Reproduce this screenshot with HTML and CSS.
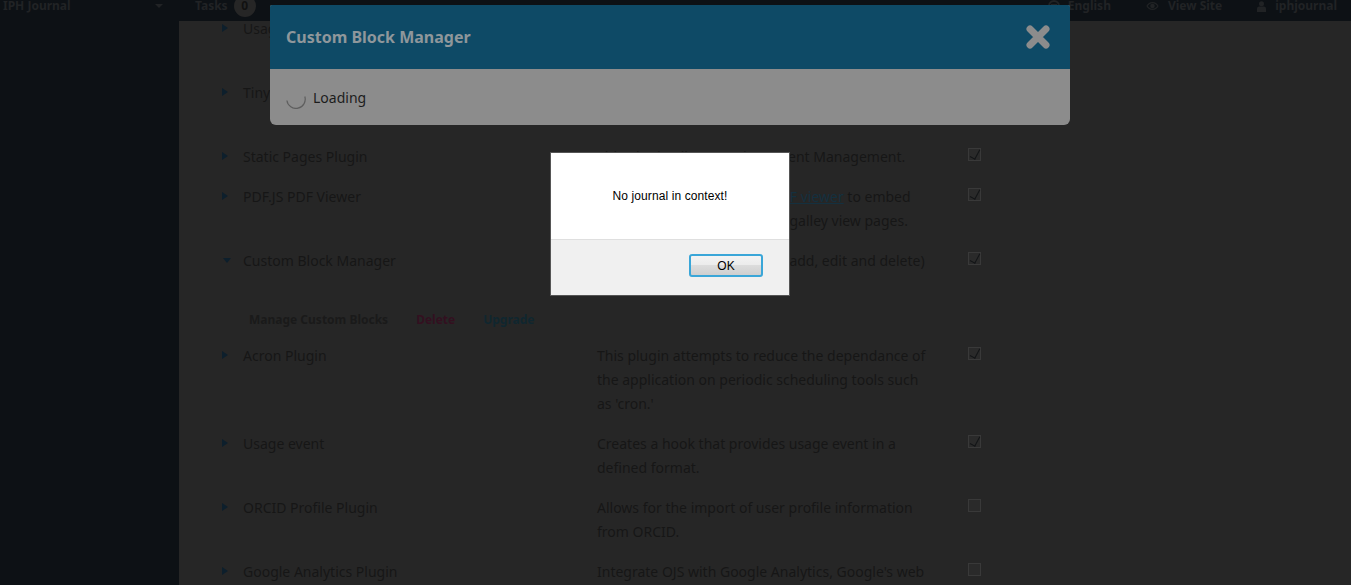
FILE: index.html
```html
<!DOCTYPE html>
<html lang="en">
<head>
<meta charset="utf-8">
<title>Custom Block Manager</title>
<link rel="stylesheet" href="styles.css">
</head>
<body>
<header class="topbar">
  <div class="brand"><span class="brand-name">IPH Journal</span><span class="caret"></span></div>
  <div class="tasks"><span>Tasks</span><span class="badge">0</span></div>
  <nav class="topnav">
    <span class="navitem"><svg class="ico" viewBox="0 0 12 12"><circle cx="6" cy="6" r="5" fill="none" stroke="currentColor" stroke-width="2"/><path d="M3 4h6v4H3z" fill="currentColor"/></svg>English</span>
    <span class="navitem"><svg class="ico eye" viewBox="0 0 13 10"><path d="M6.5 1C3.5 1 1.3 3 .4 5c.9 2 3.1 4 6.1 4s5.2-2 6.1-4c-.9-2-3.1-4-6.1-4zm0 1.3c2 0 3.8 1.2 4.8 2.7-1 1.5-2.8 2.7-4.8 2.7S2.7 6.5 1.7 5c1-1.5 2.8-2.7 4.8-2.7z" fill="currentColor"/><circle cx="6.5" cy="5" r="2.3" fill="currentColor"/></svg>View Site</span>
    <span class="navitem"><svg class="ico user" viewBox="0 0 10 12"><circle cx="5" cy="3" r="2.8" fill="currentColor"/><path d="M0 12V8.5C0 7 1.2 6 2.5 6h5C8.8 6 10 7 10 8.5V12z" fill="currentColor"/></svg>iphjournal</span>
  </nav>
</header>
<div class="shell">
  <aside class="sidebar"></aside>
  <main class="main">
    <div class="list">
      <div class="row"><span class="arrow"></span><span class="name">Usage Statistics Plugin</span><p class="desc">Present data objects usage statistics.<br>Collects and reports usage.</p><span class="box on"></span></div>
      <div class="row"><span class="arrow"></span><span class="name">TinyMCE Plugin</span><p class="desc">This plugin enables WYSIWYG editing of OJS<br>textareas.</p><span class="box on"></span></div>
      <div class="row"><span class="arrow"></span><span class="name">Static Pages Plugin</span><p class="desc">This plugin allows Static Content Management.</p><span class="box on"></span></div>
      <div class="row"><span class="arrow"></span><span class="name">PDF.JS PDF Viewer</span><p class="desc">This plugin uses the <a class="link" href="#">pdf.js PDF viewer</a> to embed PDFs on the article and issue galley view pages.</p><span class="box on"></span></div>
      <div class="row"><span class="arrow down"></span><span class="name">Custom Block Manager</span><p class="desc">This plugin lets you manage (add, edit and delete)</p><span class="box on"></span></div>
      <div class="actions"><a class="act" href="#">Manage Custom Blocks</a><a class="act del" href="#">Delete</a><a class="act up" href="#">Upgrade</a></div>
      <div class="row"><span class="arrow"></span><span class="name">Acron Plugin</span><p class="desc">This plugin attempts to reduce the dependance of the application on periodic scheduling tools such as 'cron.'</p><span class="box on"></span></div>
      <div class="row"><span class="arrow"></span><span class="name">Usage event</span><p class="desc">Creates a hook that provides usage event in a defined format.</p><span class="box on"></span></div>
      <div class="row"><span class="arrow"></span><span class="name">ORCID Profile Plugin</span><p class="desc">Allows for the import of user profile information from ORCID.</p><span class="box"></span></div>
      <div class="row"><span class="arrow"></span><span class="name">Google Analytics Plugin</span><p class="desc">Integrate OJS with Google Analytics, Google's web site traffic analysis application.</p><span class="box"></span></div>
    </div>
  </main>
</div>
<section class="modal">
  <div class="modal-head">
    <h1 class="modal-title">Custom Block Manager</h1>
    <svg class="close" viewBox="0 0 24 24"><path d="M12 12L4 4M12 12L20 4M12 12L4 20M12 12L20 20" stroke="currentColor" stroke-width="7" stroke-linecap="round"/></svg>
  </div>
  <div class="modal-body"><svg class="spinner" viewBox="0 0 20 20"><path d="M18.8 7.5A9.2 9.2 0 1 1 .9 11.5" fill="none" stroke="currentColor" stroke-width="1.2"/></svg><span>Loading</span></div>
</section>
<section class="dialog">
  <div class="dialog-msg">No journal in context!</div>
  <div class="dialog-foot"><button class="ok">OK</button></div>
</section>
</body>
</html>
```
FILE: styles.css
```css
* { box-sizing: border-box; }
html, body { height: 100%; }
body {
  margin: 0;
  overflow: hidden;
  display: flex;
  flex-direction: column;
  background: #262626;
  font-family: "Noto Sans", sans-serif;
  font-size: 14px;
  line-height: 24px;
  color: #161616;
}
.topbar {
  flex: none;
  height: 21px;
  display: flex;
  align-items: flex-start;
  overflow: hidden;
  background: #0d1115;
  color: #212325;
  font-size: 12px;
  font-weight: 700;
  line-height: 12px;
}
.brand {
  width: 195px;
  flex: none;
  padding-left: 3px;
  display: flex;
  position: relative;
}
.caret {
  position: absolute;
  left: 155px;
  top: 4px;
  border: 4px solid transparent;
  border-top-color: #212325;
  border-bottom: 0;
}
.tasks { display: flex; gap: 6px; }
.badge {
  width: 22px;
  height: 22px;
  margin-top: -5px;
  border-radius: 50%;
  background: #262626;
  color: #111;
  display: flex;
  align-items: center;
  justify-content: center;
}
.topnav {
  margin-left: auto;
  padding-right: 14px;
  display: flex;
  gap: 35px;
}
.navitem { display: flex; align-items: flex-start; }
.ico { width: 12px; height: 12px; margin-right: 8px; flex: none; }
.eye { width: 13px; height: 10px; margin-right: 9px; margin-top: 1px; }
.user { width: 9px; height: 11px; margin-right: 9px; margin-top: 1px; }
.shell { flex: 1; min-height: 0; display: flex; }
.sidebar { width: 179px; flex: none; background: #0d1115; }
.main { flex: 1; min-width: 0; overflow: hidden; background: #262626; }
.list { margin-top: -12px; }
.row {
  display: grid;
  grid-template-columns: 21px 354px 371px 13px;
  padding: 8px 0 8px 43px;
}
.name { display: block; }
.desc { margin: 0; max-width: 335px; }
.link { color: #14303f; }
.arrow {
  width: 0;
  height: 0;
  margin-top: 7px;
  border-style: solid;
  border-width: 4px 0 4px 6px;
  border-color: transparent transparent transparent #0d1f2c;
}
.arrow.down {
  margin-top: 9px;
  margin-left: 1px;
  border-width: 5px 4px 0 4px;
  border-color: #0d1f2c transparent transparent transparent;
}
.box {
  width: 13px;
  height: 13px;
  margin-top: 3px;
  border: 1px solid #393939;
  background: #2a2a2a;
  position: relative;
}
.box.on::after {
  content: "";
  position: absolute;
  left: 3px;
  top: -1px;
  width: 5px;
  height: 10px;
  border: solid #121416;
  border-width: 0 1.5px 1.5px 0;
  transform: rotate(28deg);
}
.actions {
  height: 55px;
  padding: 27px 0 0 70px;
  display: flex;
  gap: 28px;
  font-size: 12px;
  font-weight: 700;
}
.act { color: #1a1a1a; text-decoration: none; }
.act.del { color: #331020; }
.act.up { color: #10262f; }
.modal {
  position: absolute;
  left: 270px;
  top: 5px;
  width: 800px;
  height: 120px;
  border-radius: 2px 2px 6px 6px;
  overflow: hidden;
  background: #8c8c8c;
}
.modal-head {
  height: 64px;
  padding: 0 20px 0 16px;
  display: flex;
  align-items: center;
  justify-content: space-between;
  background: #0e4a66;
  color: #8c8c8c;
}
.modal-title {
  margin: 0;
  font-size: 16px;
  font-weight: 700;
  line-height: 24px;
  color: #8f979b;
}
.close { width: 24px; height: 24px; }
.modal-body {
  height: 56px;
  padding: 2px 0 0 16px;
  display: flex;
  align-items: center;
  gap: 7px;
  color: #1c1c1c;
}
.spinner {
  width: 20px;
  height: 20px;
  margin-top: 2px;
  flex: none;
  color: #5e5e5e;
}
.dialog {
  position: absolute;
  left: 550px;
  top: 152px;
  width: 240px;
  height: 144px;
  border: 1px solid #555;
  display: flex;
  flex-direction: column;
  font-family: "Liberation Sans", Arial, sans-serif;
  font-size: 12px;
  letter-spacing: .1px;
  color: #000;
}
.dialog-msg {
  height: 87px;
  background: #fff;
  border-bottom: 1px solid #dfdfdf;
  display: flex;
  align-items: center;
  justify-content: center;
}
.dialog-foot {
  flex: 1;
  background: #f0f0f0;
  padding: 14px 26px 0 0;
  display: flex;
  justify-content: flex-end;
  align-items: flex-start;
}
.ok {
  width: 74px;
  height: 23px;
  padding: 0;
  border: 2px solid #3aa6d8;
  border-radius: 3px;
  background: linear-gradient(#f3f3f3 0, #ececec 45%, #dcdcdc 50%, #cfcfcf 100%);
  font-family: "Liberation Sans", Arial, sans-serif;
  font-size: 12px;
  color: #000;
}
```
